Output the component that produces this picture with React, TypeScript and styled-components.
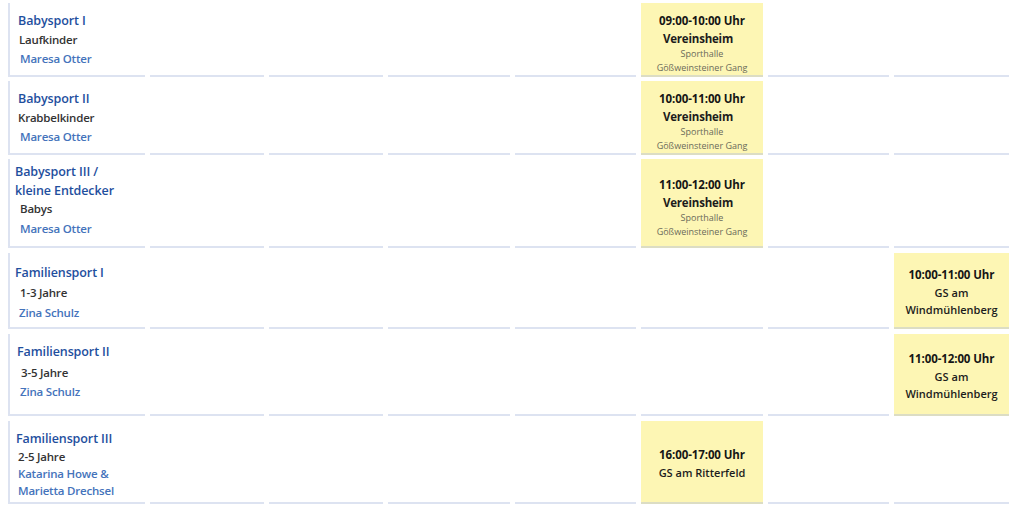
import React from "react";
import styled, { createGlobalStyle } from "styled-components";

const GlobalStyle = createGlobalStyle`
  html, body { margin: 0; padding: 0; background: #ffffff; }
  body { font-family: "Open Sans", "Noto Sans", Arial, sans-serif; }
`;

const Page = styled.div`
  padding: 3px 15px 0 8px;
`;

const Table = styled.div`
  display: flex;
  flex-direction: column;
  gap: 5px;
`;

const Row = styled.div<{ $h: number }>`
  display: grid;
  grid-template-columns: 137px 114px 114px 122px 121px 122px 121px 115px;
  column-gap: 5px;
  height: ${(p) => p.$h}px;
`;

const Cell = styled.div<{ $slot?: boolean; $top?: number }>`
  box-sizing: border-box;
  border-bottom: 2px solid rgba(170, 185, 220, 0.4);
  background: ${(p) => (p.$slot ? "#fdf6b4" : "transparent")};
  ${(p) =>
    p.$slot &&
    `
    display: flex;
    flex-direction: column;
    justify-content: center;
    align-items: center;
    text-align: center;
    padding-top: ${p.$top ?? 5}px;
  `}
`;

const CourseCell = styled(Cell)<{ $pt: number }>`
  border-left: 2px solid rgba(170, 185, 220, 0.4);
  display: flex;
  flex-direction: column;
  justify-content: flex-start;
  padding-left: 8px;
  padding-top: ${(p) => p.$pt}px;
`;

const Title = styled.div<{ $x: number }>`
  color: #1f4f9e;
  font-size: 12.5px;
  font-weight: 600;
  line-height: 19px;
  margin-left: ${(p) => p.$x}px;
  letter-spacing: -0.1px;
`;

const Sub = styled.div<{ $x: number; $gap: number }>`
  color: #333333;
  font-size: 11.5px;
  font-weight: 600;
  line-height: 19px;
  letter-spacing: -0.2px;
  margin-left: ${(p) => p.$x}px;
  margin-top: ${(p) => p.$gap}px;
`;

const Trainer = styled.div<{ $x: number; $gap: number }>`
  color: #4473bb;
  font-size: 11.5px;
  font-weight: 600;
  line-height: 17px;
  letter-spacing: -0.2px;
  margin-left: ${(p) => p.$x}px;
  margin-top: ${(p) => p.$gap}px;
`;

const Time = styled.div`
  color: #151515;
  font-size: 11.5px;
  font-weight: 700;
  line-height: 18px;
  letter-spacing: -0.1px;
`;

const Place = styled.div<{ $big?: boolean }>`
  color: #1c1c1c;
  font-size: 11.5px;
  font-size: ${(p) => (p.$big ? "11.5px" : "11px")};
  font-weight: ${(p) => (p.$big ? 700 : 600)};
  letter-spacing: ${(p) => (p.$big ? "-0.2px" : "0")};
  line-height: 16px;
  margin-top: 1px;
  margin-right: ${(p) => (p.$big ? "8px" : "0")};
`;

const Detail = styled.div`
  color: #6a6a5a;
  font-size: 9px;
  font-weight: 500;
  line-height: 14px;
`;

type Slot = {
  col: number;
  time: string;
  place: string[];
  big?: boolean;
  details?: string[];
};

type Course = {
  h: number;
  pt: number;
  title: string[];
  tx: number;
  sub: string;
  sx: number;
  sgap: number;
  trainer: string[];
  nx: number;
  ngap: number;
  slot: Slot;
};

const vh: Slot["details"] = ["Sporthalle", "Gößweinsteiner Gang"];

const courses: Course[] = [
  {
    h: 73,
    pt: 8,
    title: ["Babysport I"],
    tx: 0,
    sub: "Laufkinder",
    sx: 1,
    sgap: 0,
    trainer: ["Maresa Otter"],
    nx: 2,
    ngap: 1,
    slot: { col: 5, time: "09:00-10:00 Uhr", place: ["Vereinsheim"], big: true, details: vh },
  },
  {
    h: 73,
    pt: 8,
    title: ["Babysport II"],
    tx: 0,
    sub: "Krabbelkinder",
    sx: 0,
    sgap: 0,
    trainer: ["Maresa Otter"],
    nx: 2,
    ngap: 1,
    slot: { col: 5, time: "10:00-11:00 Uhr", place: ["Vereinsheim"], big: true, details: vh },
  },
  {
    h: 89,
    pt: 3,
    title: ["Babysport III /", "kleine Entdecker"],
    tx: -3,
    sub: "Babys",
    sx: 2,
    sgap: -1,
    trainer: ["Maresa Otter"],
    nx: 2,
    ngap: 2,
    slot: { col: 5, time: "11:00-12:00 Uhr", place: ["Vereinsheim"], big: true, details: vh },
  },
  {
    h: 76,
    pt: 10,
    title: ["Familiensport I"],
    tx: -3,
    sub: "1-3 Jahre",
    sx: 2,
    sgap: 1,
    trainer: ["Zina Schulz"],
    nx: 1,
    ngap: 2,
    slot: { col: 7, time: "10:00-11:00 Uhr", place: ["GS am", "Windmühlenberg"] },
  },
  {
    h: 82,
    pt: 8,
    title: ["Familiensport II"],
    tx: -1,
    sub: "3-5 Jahre",
    sx: 3,
    sgap: 2,
    trainer: ["Zina Schulz"],
    nx: 2,
    ngap: 1,
    slot: { col: 7, time: "11:00-12:00 Uhr", place: ["GS am", "Windmühlenberg"] },
  },
  {
    h: 83,
    pt: 8,
    title: ["Familiensport III"],
    tx: -2,
    sub: "2-5 Jahre",
    sx: 0,
    sgap: -1,
    trainer: ["Katarina Howe &", "Marietta Drechsel"],
    nx: 0,
    ngap: -1,
    slot: { col: 5, time: "16:00-17:00 Uhr", place: ["GS am Ritterfeld"] },
  },
];

function SlotContent({ slot }: { slot: Slot }) {
  return (
    <>
      <Time>{slot.time}</Time>
      {slot.place.map((p) => (
        <Place key={p} $big={slot.big}>
          {p}
        </Place>
      ))}
      {slot.details?.map((d) => (
        <Detail key={d}>{d}</Detail>
      ))}
    </>
  );
}

export default function App() {
  return (
    <>
      <GlobalStyle />
      <Page>
        <Table>
          {courses.map((c) => (
            <Row key={c.title.join(" ")} $h={c.h}>
              <CourseCell $pt={c.pt}>
                {c.title.map((t) => (
                  <Title key={t} $x={c.tx}>
                    {t}
                  </Title>
                ))}
                <Sub $x={c.sx} $gap={c.sgap}>
                  {c.sub}
                </Sub>
                {c.trainer.map((t, i) => (
                  <Trainer key={t} $x={c.nx} $gap={i === 0 ? c.ngap : 0}>
                    {t}
                  </Trainer>
                ))}
              </CourseCell>
              {Array.from({ length: 7 }, (_, i) => i + 1).map((col) =>
                col === c.slot.col ? (
                  <Cell key={col} $slot $top={c.slot.big ? 9 : 4}>
                    <SlotContent slot={c.slot} />
                  </Cell>
                ) : (
                  <Cell key={col} />
                )
              )}
            </Row>
          ))}
        </Table>
      </Page>
    </>
  );
}
